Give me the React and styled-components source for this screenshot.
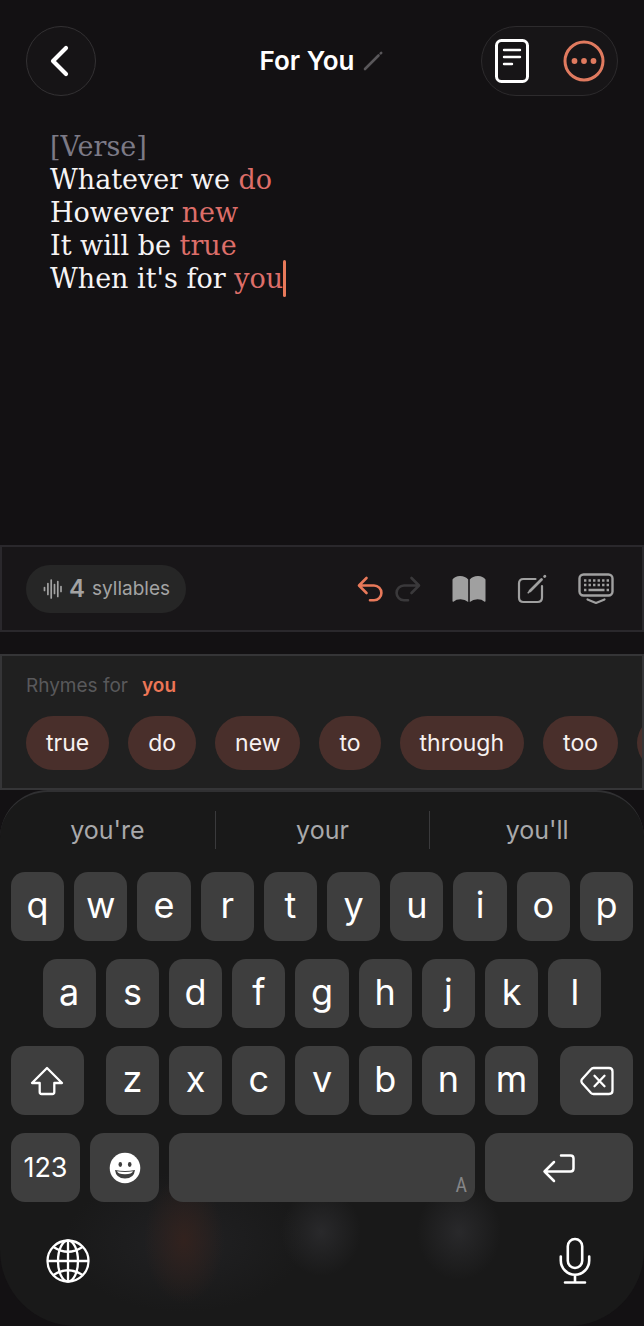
import React, { useState } from "react";
import styled, { createGlobalStyle } from "styled-components";

const GlobalStyle = createGlobalStyle`
* {
  box-sizing: border-box;
}
body {
  margin: 0;
  background: #131113;
  font-family: Inter, "Liberation Sans", sans-serif;
  color: #ffffff;
}
button {
  font: inherit;
  color: inherit;
  border: 0;
  padding: 0;
  background: none;
  cursor: pointer;
}
`;

const Screen = styled.div`
display: flex;
flex-direction: column;
min-height: 100vh;
background: #131113;
overflow: hidden;
`;

const Header = styled.header`
display: grid;
grid-template-columns: 1fr auto 1fr;
align-items: center;
padding: 26px;
`;
const BackButton = styled.button`
display: grid;
place-items: center;
width: 70px;
height: 70px;
border: 1px solid #333133;
border-radius: 50%;
background: #161416;
`;
const TitleButton = styled.button`
display: flex;
align-items: center;
gap: 8px;
`;
const Title = styled.h1`
margin: 0;
font-size: 26px;
line-height: 32px;
font-weight: 600;
`;
const HeaderActions = styled.div`
display: flex;
justify-self: end;
align-items: center;
height: 70px;
padding: 0 12px;
gap: 33px;
border: 1px solid #2d2b2d;
border-radius: 35px;
background: #171517;
`;
const IconButton = styled.button`
display: grid;
place-items: center;
color: ${props => props.$color || "#ffffff"};
`;

const Lyrics = styled.div`
flex: 1;
min-height: 320px;
padding: 8px 50px;
font-family: "DejaVu Serif", "Liberation Serif", serif;
font-size: 27px;
line-height: 33px;
outline: none;
`;
const Line = styled.p`
display: flex;
align-items: center;
margin: 0;
height: 33px;
white-space: pre;
color: ${props => (props.$section ? "#7c7a86" : "#f6f4f5")};
`;
const Rhyme = styled.span`
color: #dd6e69;
`;
const Caret = styled.span`
width: 3px;
height: 37px;
border-radius: 2px;
background: #e8795a;
`;

const Toolbar = styled.div`
display: flex;
align-items: center;
justify-content: space-between;
height: 87px;
padding: 0 28px 0 24px;
border: 2px solid #2a282c;
background: #181618;
`;
const SyllableCount = styled.div`
display: flex;
align-items: center;
height: 48px;
padding: 0 16px 0 17px;
border-radius: 24px;
background: #262626;
color: #a3a3a3;
font-size: 19px;
`;
const SyllableNumber = styled.strong`
margin: 0 7px 0 6px;
font-size: 24px;
font-weight: 600;
`;
const Tools = styled.div`
display: flex;
align-items: center;
gap: 31px;
`;
const HistoryTools = styled.div`
display: flex;
gap: 12px;
`;

const RhymePanel = styled.section`
margin-top: 22px;
height: 136px;
padding: 18px 0 0 24px;
border: 2px solid #353537;
background: #202020;
overflow: hidden;
`;
const RhymeLabel = styled.h2`
display: flex;
gap: 14px;
margin: 0 0 18px;
font-size: 19px;
line-height: 24px;
font-weight: 400;
color: #59595b;
`;
const RhymeWord = styled.strong`
font-weight: 600;
color: #ec7656;
`;
const Chips = styled.div`
display: flex;
gap: 19px;
`;
const Chip = styled.button`
flex: none;
height: 54px;
padding: 0 20px;
border-radius: 27px;
background: #492f2b;
color: #f7f1f0;
font-size: 23px;
`;

const KeyboardPanel = styled.section`
padding: 0 11px 40px;
border-top: 2px solid #303032;
border-radius: 48px 48px 76px 76px;
background:
  radial-gradient(40px 64px at 184px 448px, #32221e, transparent),
  radial-gradient(40px 44px at 321px 440px, #29292b, transparent),
  radial-gradient(42px 48px at 459px 440px, #29292b, transparent),
  radial-gradient(120px 70px at 184px 450px, #212123, transparent),
  #191919;
`;
const Suggestions = styled.div`
display: grid;
grid-template-columns: repeat(3, 1fr);
margin: 0 -11px;
padding: 19px 0 23px;
`;
const Suggestion = styled.button`
height: 38px;
font-size: 25px;
color: #a9a9ab;
& + & {
  border-left: 1px solid #3a3a3c;
}
`;
const Keys = styled.div`
display: grid;
grid-template-columns: repeat(20, 1fr);
gap: 18px 10px;
`;
const Key = styled.button`
display: grid;
place-items: center;
grid-column: ${props => props.$start || "auto"} / span ${props => props.$span || 2};
height: 69px;
padding-bottom: ${props => (props.$small ? 0 : 4)}px;
margin-left: ${props => props.$left || 0}px;
margin-right: ${props => props.$right || 0}px;
border-radius: 14px;
background: #3e3e3e;
font-size: ${props => (props.$small ? 27 : 36)}px;
`;
const KeyPair = styled.div`
display: grid;
grid-template-columns: 1fr 1fr;
grid-column: span 5;
gap: 10px;
`;
const HalfKey = styled(Key)`
grid-column: auto;
`;
const SpaceKey = styled(Key)`
place-items: end;
padding: 0 8px 6px;
color: #858587;
font-family: "Roboto Condensed", Roboto, sans-serif;
`;
const SpaceMark = styled.span`
font-size: 20px;
line-height: 22px;
`;
const BottomBar = styled.div`
display: flex;
justify-content: space-between;
align-items: center;
height: 50px;
margin-top: 34px;
padding: 0 42px 0 35px;
`;

const BackIcon = () => (
  <svg width="22" height="34" viewBox="0 0 22 34" fill="none" stroke="currentColor" strokeWidth="4.2" strokeLinecap="round" strokeLinejoin="round">
    <path d="M16 4 L3 17 L16 30" />
  </svg>
);

const PencilIcon = () => (
  <svg width="22" height="22" viewBox="0 0 22 22" stroke="#59575a" strokeWidth="2.6" strokeLinecap="round">
    <path d="M3 19 L16.500 5.500" />
    <path d="M18.700 3.300 L19.200 2.800" />
  </svg>
);

const PageIcon = () => (
  <svg width="36" height="46" viewBox="0 0 36 46" fill="none" stroke="currentColor" strokeLinecap="round">
    <rect x="2.500" y="2.500" width="31" height="41" rx="5" strokeWidth="3" />
    <path d="M10 12 H26 M10 19 H26 M10 26 H18" strokeWidth="2.400" />
  </svg>
);

const MoreIcon = () => (
  <svg width="42" height="42" viewBox="0 0 42 42" fill="none">
    <circle cx="21" cy="21" r="19" stroke="currentColor" strokeWidth="3" />
    <g fill="currentColor">
      <circle cx="11.500" cy="21" r="2.900" />
      <circle cx="21" cy="21" r="2.900" />
      <circle cx="30.500" cy="21" r="2.900" />
    </g>
  </svg>
);

const WaveIcon = () => (
  <svg width="20" height="22" viewBox="0 0 20 22" stroke="currentColor" strokeWidth="1.700" strokeLinecap="round">
    <path d="M1.500 9.500 V12.500 M4.900 5.500 V16.500 M8.200 2 V20 M11.500 6.500 V15.500 M14.800 3.500 V18.500 M18 8.500 V13.500" />
  </svg>
);

const UndoIcon = () => (
  <svg width="26" height="26" viewBox="0 0 26 26" fill="none" stroke="currentColor" strokeWidth="2.600" strokeLinecap="round" strokeLinejoin="round">
    <path d="M9.500 2 L2 9.500 L9.500 17 M2.500 9.500 H17 A7 7 0 0 1 17 24.300 H13" />
  </svg>
);

const RedoIcon = () => (
  <svg width="26" height="26" viewBox="0 0 26 26" fill="none" stroke="currentColor" strokeWidth="2.600" strokeLinecap="round" strokeLinejoin="round">
    <path d="M16.500 2 L24 9.500 L16.500 17 M23.500 9.500 H9 A7 7 0 0 0 9 24.300 H13" />
  </svg>
);

const BookIcon = () => (
  <svg width="34" height="28" viewBox="0 0 34 28" fill="currentColor">
    <path d="M0.500 4.500 Q3 1 8 1 Q13.500 1 16.200 4.500 V27 Q13 24.300 8.500 24.300 Q4 24.300 1.800 26.600 Q0.500 27.200 0.500 26 Z" />
    <path d="M33.500 4.500 Q31 1 26 1 Q20.500 1 17.800 4.500 V27 Q21 24.300 25.500 24.300 Q30 24.300 32.200 26.600 Q33.500 27.200 33.500 26 Z" />
  </svg>
);

const ComposeIcon = () => (
  <svg width="30" height="30" viewBox="0 0 30 30" fill="none" stroke="currentColor" strokeLinecap="round" strokeLinejoin="round">
    <path d="M18.500 5 H6.500 Q2 5 2 9.500 V23.500 Q2 28 6.500 28 H20.500 Q25 28 25 23.500 V12" strokeWidth="2.200" />
    <path d="M13 17 L24.500 5.500" strokeWidth="2.800" />
    <path d="M11.200 18.800 L13 17" strokeWidth="1.600" />
    <path d="M27.600 2.600 L27.900 2.300" strokeWidth="2.800" />
  </svg>
);

const HideKeyboardIcon = () => (
  <svg width="36" height="32" viewBox="0 0 36 32" fill="none" stroke="currentColor" strokeLinecap="round" strokeLinejoin="round">
    <rect x="1.500" y="1.500" width="33" height="21" rx="4" strokeWidth="2.400" />
    <path d="M6 7.500 H31 M6 12 H31" strokeWidth="2.400" strokeDasharray="2.400 2.120" strokeLinecap="butt" />
    <path d="M6 17 H8.400 M28.600 17 H31 M10.500 17 H26.500" strokeWidth="2.400" strokeLinecap="butt" />
    <path d="M9.500 26.500 L18 30 L26.500 26.500" strokeWidth="2.200" />
  </svg>
);

const ShiftIcon = () => (
  <svg width="34" height="30" viewBox="0 0 34 30" fill="none" stroke="currentColor" strokeWidth="2.300" strokeLinejoin="round">
    <path d="M17 2 L32 17 H24.300 V26 Q24.300 28 22.300 28 H11.700 Q9.700 28 9.700 26 V17 H2 Z" />
  </svg>
);

const DeleteIcon = () => (
  <svg width="34" height="30" viewBox="0 0 34 30" fill="none" stroke="currentColor" strokeWidth="2.300" strokeLinecap="round" strokeLinejoin="round">
    <path d="M13.500 2 H29 Q32.500 2 32.500 5.500 V24.500 Q32.500 28 29 28 H13.500 Q12 28 11 27 L2 17 Q0.800 15 2 13.200 L11 3.200 Q12 2 13.500 2 Z" />
    <path d="M14.500 9.800 L24.500 20.200 M24.500 9.800 L14.500 20.200" />
  </svg>
);

const EmojiIcon = () => (
  <svg width="32" height="32" viewBox="0 0 32 32">
    <circle cx="16" cy="16" r="15.300" fill="#ffffff" />
    <ellipse cx="11.300" cy="12.500" rx="1.800" ry="2.400" fill="#3e3e3e" />
    <ellipse cx="20.700" cy="12.500" rx="1.800" ry="2.400" fill="#3e3e3e" />
    <path d="M6 18 Q16 20 26 18 Q25 26.500 16 26.500 Q7 26.500 6 18 Z" fill="#3e3e3e" />
    <path d="M8 19.300 Q16 20.900 24 19.300 Q23 22.200 16 22.200 Q9 22.200 8 19.300 Z" fill="#ffffff" />
  </svg>
);

const ReturnIcon = () => (
  <svg width="34" height="30" viewBox="0 0 34 30" fill="none" stroke="currentColor" strokeWidth="2.500" strokeLinecap="round" strokeLinejoin="round">
    <path d="M19 2.500 H28.500 Q31.500 2.500 31.500 5.500 V15.500 Q31.500 18.500 28.500 18.500 H2.500 M12 9 L2.500 18.500 L12 28" />
  </svg>
);

const GlobeIcon = () => (
  <svg width="44" height="44" viewBox="0 0 44 44" fill="none" stroke="currentColor" strokeWidth="2.300">
    <circle cx="22" cy="22" r="20.500" />
    <ellipse cx="22" cy="22" rx="10" ry="20.500" />
    <path d="M22 1.500 V42.500 M1.500 22 H42.500" />
    <path d="M7.500 8 Q22 17.500 36.500 8 M7.500 36 Q22 26.500 36.500 36" />
  </svg>
);

const MicIcon = () => (
  <svg width="32" height="48" viewBox="0 0 32 48" fill="none" stroke="currentColor" strokeWidth="2.600" strokeLinecap="round">
    <rect x="8.800" y="2" width="14.400" height="29" rx="7.200" />
    <path d="M1.800 19.500 V23.500 A14.200 14.200 0 0 0 30.200 23.500 V19.500 M16 38 V45.500 M6 45.500 H26" />
  </svg>
);

const lyrics = [
  { text: "Whatever we ", rhyme: "do" },
  { text: "However ", rhyme: "new" },
  { text: "It will be ", rhyme: "true" },
  { text: "When it's for ", rhyme: "you" }
];
const rhymes = ["true", "do", "new", "to", "through", "too", "blue"];
const suggestions = ["you're", "your", "you'll"];

const Letters = ({ letters, start, onPress }) =>
  letters.split("").map((letter, i) => (
    <Key key={letter} $start={i === 0 ? start : undefined} onClick={() => onPress(letter)}>
      {letter}
    </Key>
  ));

function App() {
  const [typed, setTyped] = useState("");
  const type = letter => setTyped(typed + letter);

  return (
    <Screen>
      <GlobalStyle />
      <Header>
        <BackButton aria-label="Back"><BackIcon /></BackButton>
        <TitleButton aria-label="Rename For You">
          <Title>For You</Title>
          <PencilIcon />
        </TitleButton>
        <HeaderActions>
          <IconButton aria-label="Notes"><PageIcon /></IconButton>
          <IconButton aria-label="More" $color="#e07a5f"><MoreIcon /></IconButton>
        </HeaderActions>
      </Header>

      <Lyrics role="textbox" aria-multiline="true" aria-label="Lyrics" tabIndex={0}>
        <Line $section>[Verse]</Line>
        {lyrics.map((line, i) => (
          <Line key={line.rhyme}>
            {line.text}
            <Rhyme>{line.rhyme}</Rhyme>
            {i === lyrics.length - 1 && <>{typed}<Caret /></>}
          </Line>
        ))}
      </Lyrics>

      <Toolbar>
        <SyllableCount>
          <WaveIcon />
          <SyllableNumber>4</SyllableNumber>
          syllables
        </SyllableCount>
        <Tools>
          <HistoryTools>
            <IconButton aria-label="Undo" $color="#e8795a" onClick={() => setTyped(typed.slice(0, -1))}>
              <UndoIcon />
            </IconButton>
            <IconButton aria-label="Redo" $color="#3a393b"><RedoIcon /></IconButton>
          </HistoryTools>
          <IconButton aria-label="Dictionary" $color="#a0a0a0"><BookIcon /></IconButton>
          <IconButton aria-label="Compose" $color="#a0a0a0"><ComposeIcon /></IconButton>
          <IconButton aria-label="Hide keyboard" $color="#a0a0a0"><HideKeyboardIcon /></IconButton>
        </Tools>
      </Toolbar>

      <RhymePanel>
        <RhymeLabel>Rhymes for <RhymeWord>you</RhymeWord></RhymeLabel>
        <Chips>
          {rhymes.map(word => <Chip key={word}>{word}</Chip>)}
        </Chips>
      </RhymePanel>

      <KeyboardPanel aria-label="Keyboard">
        <Suggestions>
          {suggestions.map(word => <Suggestion key={word}>{word}</Suggestion>)}
        </Suggestions>
        <Keys>
          <Letters letters="qwertyuiop" onPress={type} />
          <Letters letters="asdfghjkl" start={2} onPress={type} />
          <Key $start={1} $span={3} $right={12} $small aria-label="Shift"><ShiftIcon /></Key>
          <Letters letters="zxcvbnm" onPress={type} />
          <Key $span={3} $left={12} $small aria-label="Delete" onClick={() => setTyped(typed.slice(0, -1))}>
            <DeleteIcon />
          </Key>
          <KeyPair>
            <HalfKey $small>123</HalfKey>
            <HalfKey $small aria-label="Emoji"><EmojiIcon /></HalfKey>
          </KeyPair>
          <SpaceKey $span={10} aria-label="Space" onClick={() => type(" ")}><SpaceMark>A</SpaceMark></SpaceKey>
          <Key $span={5} $small aria-label="Return"><ReturnIcon /></Key>
        </Keys>
        <BottomBar>
          <IconButton aria-label="Next keyboard"><GlobeIcon /></IconButton>
          <IconButton aria-label="Dictate"><MicIcon /></IconButton>
        </BottomBar>
      </KeyboardPanel>
    </Screen>
  );
}

export default App;
